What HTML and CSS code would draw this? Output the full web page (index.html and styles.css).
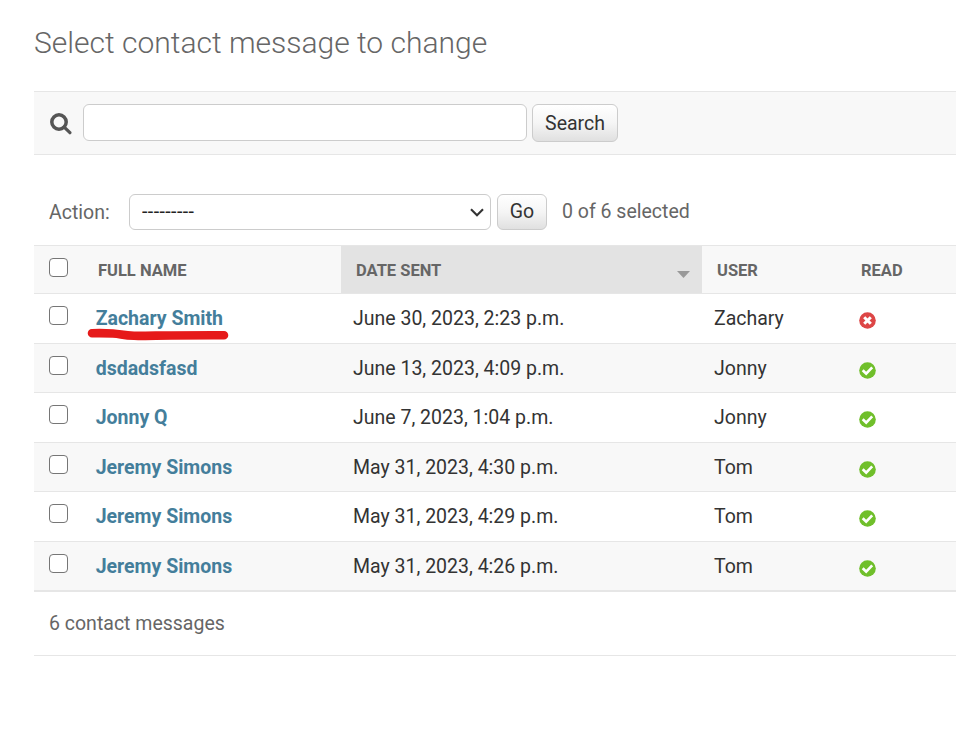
FILE: index.html
```html
<!DOCTYPE html>
<html lang="en">
<head>
<meta charset="utf-8">
<title>Select contact message to change</title>
<link rel="stylesheet" href="styles.css">
</head>
<body>
<svg class="defs" width="0" height="0" aria-hidden="true">
  <symbol id="yes" viewBox="0 0 17 17"><circle cx="8.5" cy="8.5" r="8.3" fill="#70bf2b"/><path d="M3.7 8.2l3.5 3.4 6-6.2" fill="none" stroke="#fff" stroke-width="2.7"/></symbol>
  <symbol id="no" viewBox="0 0 17 17"><circle cx="8.5" cy="8.5" r="8.3" fill="#dd4646"/><path d="M5.2 5.2l6.6 6.6M11.8 5.2l-6.6 6.6" fill="none" stroke="#fff" stroke-width="3"/></symbol>
</svg>
<main>
  <h1>Select contact message to change</h1>
  <form class="toolbar">
    <svg class="lens" width="22" height="22" viewBox="0 0 22 22"><circle cx="9" cy="9" r="7.2" fill="none" stroke="#555" stroke-width="3.5"/><path d="M14.2 14.2l5.7 5.5" stroke="#555" stroke-width="3.2" stroke-linecap="round"/></svg>
    <input class="query" type="text">
    <button class="button search" type="button">Search</button>
  </form>
  <div class="actions">
    <label for="action">Action:</label>
    <div class="select">
      <select id="action"><option>---------</option></select>
      <svg class="chevron" width="14" height="9" viewBox="0 0 14 9"><path d="M1 1.3l6 5.9 6-5.9" fill="none" stroke="#333" stroke-width="2.1"/></svg>
    </div>
    <button class="button go" type="button">Go</button>
    <span class="counter">0 of 6 selected</span>
  </div>
  <div class="results">
    <div class="row head"><div><input type="checkbox"></div><div>FULL NAME</div><div class="sorted">DATE SENT<svg width="13" height="7" viewBox="0 0 13 7"><path d="M0 0h13L6.5 7z" fill="#999"/></svg></div><div>USER</div><div>READ</div></div>
    <div class="row"><div><input type="checkbox"></div><div class="name"><a>Zachary Smith</a><svg class="mark" width="142" height="14" viewBox="0 0 142 14"><path d="M5 5.2C12 5 18 5 26 5.5S36 7.5 47 7.8S85 7 137 7.2" fill="none" stroke="#e61a1a" stroke-width="8.6" stroke-linecap="round"/></svg></div><div>June 30, 2023, 2:23 p.m.</div><div>Zachary</div><div><svg class="flag" width="17" height="17"><use href="#no"/></svg></div></div>
    <div class="row"><div><input type="checkbox"></div><div class="name"><a>dsdadsfasd</a></div><div>June 13, 2023, 4:09 p.m.</div><div>Jonny</div><div><svg class="flag" width="17" height="17"><use href="#yes"/></svg></div></div>
    <div class="row"><div><input type="checkbox"></div><div class="name"><a>Jonny Q</a></div><div>June 7, 2023, 1:04 p.m.</div><div>Jonny</div><div><svg class="flag" width="17" height="17"><use href="#yes"/></svg></div></div>
    <div class="row"><div><input type="checkbox"></div><div class="name"><a>Jeremy Simons</a></div><div>May 31, 2023, 4:30 p.m.</div><div>Tom</div><div><svg class="flag" width="17" height="17"><use href="#yes"/></svg></div></div>
    <div class="row"><div><input type="checkbox"></div><div class="name"><a>Jeremy Simons</a></div><div>May 31, 2023, 4:29 p.m.</div><div>Tom</div><div><svg class="flag" width="17" height="17"><use href="#yes"/></svg></div></div>
    <div class="row"><div><input type="checkbox"></div><div class="name"><a>Jeremy Simons</a></div><div>May 31, 2023, 4:26 p.m.</div><div>Tom</div><div><svg class="flag" width="17" height="17"><use href="#yes"/></svg></div></div>
  </div>
  <p class="paginator">6 contact messages</p>
</main>
</body>
</html>
```
FILE: styles.css
```css
* { box-sizing: border-box; }
body { margin: 0; background: #fff; color: #333; font: 19.5px/24px Roboto, "Liberation Sans", sans-serif; }
.defs { display: block; }
main { padding: 25px 20px 0 34px; }
h1 { margin: 0 0 30px; color: #666; font-size: 30px; font-weight: 300; line-height: 36px; }
.toolbar { display: flex; align-items: flex-start; height: 64px; padding: 12px 15px; background: #f8f8f8; border: solid #e6e6e6; border-width: 1px 0; }
.lens { margin: 9px 11px 0 1px; }
.query { width: 444px; height: 37px; margin: 0; border: 1px solid #ccc; border-radius: 6px; background: #fff; }
.button { margin: 0; padding: 0; border: 1px solid #ccc; border-radius: 6px; background: linear-gradient(#fff, #f5f5f5 50%, #e0e0e0); color: #333; font: inherit; }
.search { width: 86px; height: 38px; margin-left: 5px; padding-top: 2px; }
.actions { display: flex; align-items: center; height: 90px; padding: 24px 15px 0; color: #666; }
.actions label { width: 80px; padding-top: 1px; }
.select { position: relative; width: 362px; height: 36px; margin-top: -1px; }
select { display: block; width: 100%; height: 100%; padding: 0 12px; appearance: none; border: 1px solid #ccc; border-radius: 6px; background: #fff; color: #222; font: inherit; letter-spacing: 0.43px; }
.chevron { position: absolute; right: 7px; top: 14px; }
.go { width: 50px; height: 36px; margin: -1px 15px 0 6px; }
.counter { margin-top: -1px; }
.row { display: grid; grid-template-columns: 49px 258px 361px 144px 110px; height: 49.5px; border-bottom: 1px solid #e6e6e6; }
.row > div { display: flex; align-items: center; padding: 1.5px 12px 0; }
.row > div:first-child { padding: 0 0 0 15px; align-items: flex-start; }
.row > .name { padding-left: 12.7px; }
.row:nth-child(odd):not(.head) { background: #f8f8f8; }
.head { height: 49px; border-top: 1px solid #e6e6e6; background: #f8f8f8; color: #666; font-size: 16.5px; font-weight: 700; }
.row.head > div { padding: 2px 15px 0; }
.row.head > .sorted { justify-content: space-between; padding-right: 12px; background: #e3e3e3; }
.sorted svg { margin-top: 7px; }
.name { position: relative; font-weight: 700; color: #447e9b; }
.mark { position: absolute; left: 3.5px; top: 34px; z-index: 1; }
input[type="checkbox"] { appearance: none; width: 19px; height: 19px; margin: 12px 0 0 0.4px; border: 1.5px solid #767676; border-radius: 4px; background: #fff; }
.head input[type="checkbox"] { margin-top: 10px; }
.flag { margin: 3.5px 0 0 1px; }
.paginator { height: 65px; margin: 0; padding: 20px 15px; border: solid #e6e6e6; border-width: 1px 0; color: #666; }
```
